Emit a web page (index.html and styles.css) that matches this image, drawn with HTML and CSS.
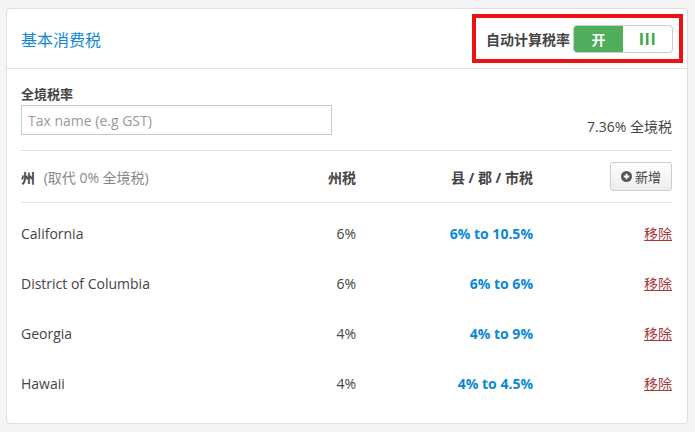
FILE: index.html
```html
<!DOCTYPE html>
<html lang="zh">
<head>
  <meta charset="UTF-8" />
  <meta name="viewport" content="width=device-width, initial-scale=1.0"/>
  <title>基本消费税</title>
  <link rel="stylesheet" href="styles.css">
</head>
<body>
  <div class="card">
    <div class="card-header">
      <h2 class="card-title">基本消费税</h2>
      <div class="auto-calc">
        <span class="auto-label">自动计算税率</span>
        <div class="toggle">
          <span class="toggle-on">开</span>
          <span class="toggle-off">III</span>
        </div>
      </div>
    </div>

    <div class="card-body">
      <div class="country-tax">
        <div class="country-field">
          <label for="taxName">全境税率</label>
          <input type="text" id="taxName" placeholder="Tax name (e.g GST)"/>
        </div>
        <div class="country-rate">7.36% 全境税</div>
      </div>

      <div class="tax-table">
        <div class="tax-row tax-head">
          <div><strong>州</strong> <span class="muted">(取代 0% 全境税)</span></div>
          <div class="num"><strong>州税</strong></div>
          <div class="num"><strong>县 / 郡 / 市税</strong></div>
          <div class="num">
            <button class="btn-add">
              <svg width="11" height="11" viewBox="0 0 12 12"><circle cx="6" cy="6" r="6" fill="#555"/><path d="M6 3v6M3 6h6" stroke="#fff" stroke-width="2"/></svg>
              新增
            </button>
          </div>
        </div>

        <div class="tax-body">
          <div class="tax-row">
            <div>California</div>
            <div class="num">6%</div>
            <div class="num range">6% to 10.5%</div>
            <div class="num"><a href="#" class="remove">移除</a></div>
          </div>
          <div class="tax-row">
            <div>District of Columbia</div>
            <div class="num">6%</div>
            <div class="num range">6% to 6%</div>
            <div class="num"><a href="#" class="remove">移除</a></div>
          </div>
          <div class="tax-row">
            <div>Georgia</div>
            <div class="num">4%</div>
            <div class="num range">4% to 9%</div>
            <div class="num"><a href="#" class="remove">移除</a></div>
          </div>
          <div class="tax-row">
            <div>Hawaii</div>
            <div class="num">4%</div>
            <div class="num range">4% to 4.5%</div>
            <div class="num"><a href="#" class="remove">移除</a></div>
          </div>
        </div>
      </div>
    </div>
  </div>
</body>
</html>
```

FILE: styles.css
```css
body {
  margin: 0;
  padding: 8px 7px 9px 6px;
  background-color: #f5f5f5;
  font-family: "Open Sans", "Noto Sans CJK SC", sans-serif;
  font-size: 14px;
  color: #444;
}

.card {
  background-color: #fff;
  border: 1px solid #dedede;
  border-radius: 4px;
  height: 416px;
  box-sizing: border-box;
}

.card-header {
  display: flex;
  align-items: center;
  justify-content: space-between;
  height: 60px;
  padding: 0 4px 0 14px;
  border-bottom: 1px solid #e2e2e2;
  box-sizing: border-box;
}

.card-title {
  margin: 0;
  font-size: 16px;
  font-weight: normal;
  color: #1188d4;
}

.auto-calc {
  display: flex;
  align-items: center;
  gap: 3px;
  height: 49px;
  padding: 0 6px 0 10px;
  border: 4px solid #ee1111;
  box-sizing: border-box;
}

.auto-label {
  font-size: 14px;
  font-weight: bold;
  color: #444;
}

.toggle {
  display: flex;
  width: 100px;
  height: 28px;
  border: 1px solid #ccc;
  border-radius: 4px;
  overflow: hidden;
  box-sizing: border-box;
}

.toggle-on,
.toggle-off {
  flex: 1;
  display: flex;
  align-items: center;
  justify-content: center;
  font-size: 14px;
  font-weight: bold;
}

.toggle-on {
  background-color: #50ad5b;
  color: #fff;
}

.toggle-off {
  font-size: 16px;
  color: #3da649;
  letter-spacing: 0.5px;
}

.card-body {
  padding: 0 15px 0 14px;
}

.country-tax {
  display: flex;
  align-items: flex-end;
  justify-content: space-between;
  padding: 15px 0 15px;
  border-bottom: 1px solid #e2e2e2;
}

.country-field label {
  display: block;
  font-size: 13px;
  font-weight: bold;
  color: #444;
  margin-bottom: 2px;
}

.country-field input {
  width: 311px;
  height: 30px;
  padding: 0 6px;
  border: 1px solid #c8c8c8;
  font-family: inherit;
  font-size: 14px;
  color: #444;
  box-sizing: border-box;
}

.country-field input::placeholder {
  color: #999;
}

.country-rate {
  margin-bottom: -1px;
}

.tax-row {
  display: grid;
  grid-template-columns: 1fr 100px 177px 139px;
  align-items: center;
  height: 50px;
}

.tax-head {
  height: 51px;
  border-bottom: 1px solid #e2e2e2;
}

.tax-head strong {
  color: #444;
}

.muted {
  color: #888;
  margin-left: 5px;
}

.tax-body {
  padding-top: 5px;
}

.num {
  text-align: right;
}

.range {
  color: #0a88d6;
  font-weight: bold;
}

.remove {
  color: #a83a3a;
  text-decoration: underline;
}

.btn-add {
  display: inline-flex;
  align-items: center;
  gap: 3px;
  height: 29px;
  width: 62px;
  justify-content: center;
  padding: 0;
  border: 1px solid #ccc;
  border-radius: 3px;
  background: linear-gradient(#ffffff, #ececec);
  font-family: inherit;
  font-size: 13px;
  color: #444;
  cursor: pointer;
}
```
